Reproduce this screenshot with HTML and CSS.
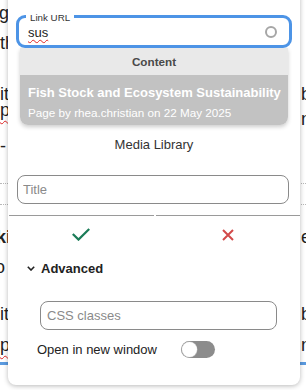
FILE: index.html
```html
<!DOCTYPE html>
<html>
<head>
<meta charset="utf-8">
<title>Link editor</title>
<link rel="stylesheet" href="styles.css">
</head>
<body>
<div class="page">
  <div class="bl r30"><span class="in1">going</span><span></span></div>
  <div class="bl r51"><span>the</span><span></span></div>
  <div class="bl r16"><span>it</span><span>b</span></div>
  <div class="bl r9"><span class="typo">ple</span><span></span></div>
  <div class="bl r27"><span></span><span>n</span></div>
  <div class="bl r47"><span>-</span><span></span></div>
  <div class="dots r21"></div>
  <div class="dots r23"></div>
  <div class="bl r30"><span class="in4 strong">ki</span><span>e</span></div>
  <div class="bl r47"><span class="in5">o</span><span></span></div>
  <div class="bl r31"><span>it</span><span>b</span></div>
  <div class="bl r27"><span class="typo">ple</span><span>n</span></div>
  <div class="blue"></div>
</div>

<div class="popup">
  <div class="linkfield">
    <span class="legend">Link URL</span>
    <span class="linkval">sus</span>
    <svg class="spin" width="12" height="12" viewBox="0 0 12 12"><circle cx="6" cy="6" r="5" fill="none" stroke="#a6a6a6" stroke-width="2"/></svg>
  </div>
  <div class="suggest">
    <div class="sg-head">Content</div>
    <div class="sg-item">
      <div class="sg-title">Fish Stock and Ecosystem Sustainability</div>
      <div class="sg-meta">Page by rhea.christian on 22 May 2025</div>
    </div>
  </div>
  <div class="media">Media Library</div>
  <input class="field title" placeholder="Title">
  <div class="actions">
    <button class="act"><svg width="18" height="13" viewBox="0 0 18 13"><path d="M0.8 6 L6.5 11.6 L17.2 1" fill="none" stroke="#1b7c58" stroke-width="2.2"/></svg></button>
    <button class="act"><svg width="12" height="12" viewBox="0 0 12 12"><path d="M1 1 L11 11 M11 1 L1 11" fill="none" stroke="#d24a4a" stroke-width="2"/></svg></button>
  </div>
  <div class="adv"><svg width="8" height="5" viewBox="0 0 8 5"><path d="M0.8 0.8 L4 4 L7.2 0.8" fill="none" stroke="#222" stroke-width="1.6"/></svg><span>Advanced</span></div>
  <input class="field css" placeholder="CSS classes">
  <div class="newwin"><span>Open in new window</span><span class="toggle"><span class="knob"></span></span></div>
</div>
</body>
</html>
```

FILE: styles.css
```css
* { box-sizing: border-box; }
html, body { margin: 0; padding: 0; background: #fff; }
body {
  position: relative;
  width: 306px;
  height: 390px;
  overflow: hidden;
  font-family: "Liberation Sans", Arial, sans-serif;
}

/* page behind the popup */
.page { padding-top: 3px; }
.bl {
  display: grid;
  grid-template-columns: 301px auto;
  font-size: 18px;
  line-height: 20px;
  color: #222;
  white-space: nowrap;
}
.strong { font-weight: bold; }
.r9 { height: 9px; }
.r16 { height: 16px; }
.r21 { height: 21px; }
.r23 { height: 23px; }
.r27 { height: 27px; }
.r30 { height: 30px; }
.r31 { height: 31px; }
.r47 { height: 47px; }
.r51 { height: 51px; }
.in1 { margin-left: -1px; }
.in4 { margin-left: -4px; }
.in5 { margin-left: -5px; }
.typo {
  text-decoration: underline wavy #e02424;
  text-decoration-thickness: 1px;
  text-underline-offset: 4px;
}
.dots { border-top: 1px dotted #b8b8b8; }
.blue { height: 3px; background: #5b9be0; }

/* popup */
.popup {
  position: absolute;
  left: 8px;
  top: -10px;
  width: 292px;
  height: 395px;
  padding-top: 25px;
  background: #fff;
  border-radius: 8px;
  box-shadow: 0 1px 5px rgba(0, 0, 0, 0.28);
}

.linkfield {
  position: relative;
  margin: 0 8px;
  height: 33px;
  border: 3px solid #4d94e6;
  border-radius: 9px;
  padding: 0 12px 0 9px;
  display: flex;
  align-items: center;
  justify-content: space-between;
}
.legend {
  position: absolute;
  left: 7px;
  top: -6.5px;
  padding: 0 4px;
  background: #fff;
  font-size: 9.75px;
  line-height: 12px;
  color: #333;
}
.linkval {
  font-size: 13px;
  color: #222;
  padding-top: 1px;
  text-decoration: underline wavy #e02424;
  text-decoration-thickness: 1px;
  text-underline-offset: 2px;
}
.spin { display: block; }

.suggest {
  margin: 0 12px;
  border-radius: 0 0 8px 8px;
  overflow: hidden;
  box-shadow: 0 2px 4px rgba(0, 0, 0, 0.2);
}
.sg-head {
  height: 27px;
  line-height: 27px;
  text-align: center;
  background: #e9e9e9;
  font-size: 11.7px;
  font-weight: bold;
  color: #4a4a4a;
}
.sg-item {
  height: 50px;
  background: #c2c2c2;
  color: #fff;
  padding: 9.5px 8px 0;
  white-space: nowrap;
}
.sg-title { font-size: 13px; font-weight: bold; line-height: 16px; }
.sg-meta { font-size: 11.7px; line-height: 14px; margin-top: 5.5px; }

.media {
  margin-top: 10px;
  height: 20px;
  line-height: 20px;
  text-align: center;
  font-size: 13px;
  color: #333;
}

.field {
  display: block;
  height: 29px;
  border: 1px solid #8a8a8a;
  border-radius: 8px;
  padding: 0 5px;
  font-family: "Liberation Sans", Arial, sans-serif;
  font-size: 13px;
  color: #222;
  background: #fff;
  outline: none;
}
.field::placeholder { color: #8a8a8a; }
.title { margin: 20px 11px 0 9px; width: 272px; }
.css { margin: 18px 23px 0 32px; width: 237px; padding-left: 6px; }

.actions {
  display: flex;
  gap: 2px;
  margin: 11px 0 0 1px;
}
.act {
  flex: 1;
  height: 38px;
  border: 0;
  border-top: 1px solid #9a9a9a;
  background: #fff;
  padding: 0;
  display: flex;
  align-items: center;
  justify-content: center;
}

.adv {
  height: 30px;
  display: flex;
  align-items: center;
  gap: 6px;
  padding-left: 19px;
  font-size: 13px;
  font-weight: bold;
  color: #222;
}

.newwin {
  margin-top: 9px;
  height: 20px;
  display: flex;
  align-items: center;
  gap: 24px;
  padding-left: 29px;
  font-size: 13px;
  color: #222;
}
.toggle {
  width: 34px;
  height: 17px;
  padding: 1px;
  border-radius: 9px;
  background: #8c8c8c;
  display: flex;
}
.knob {
  width: 15px;
  height: 15px;
  border-radius: 50%;
  background: #fff;
  box-shadow: 0 0 0 0.5px #bbb;
}
```
